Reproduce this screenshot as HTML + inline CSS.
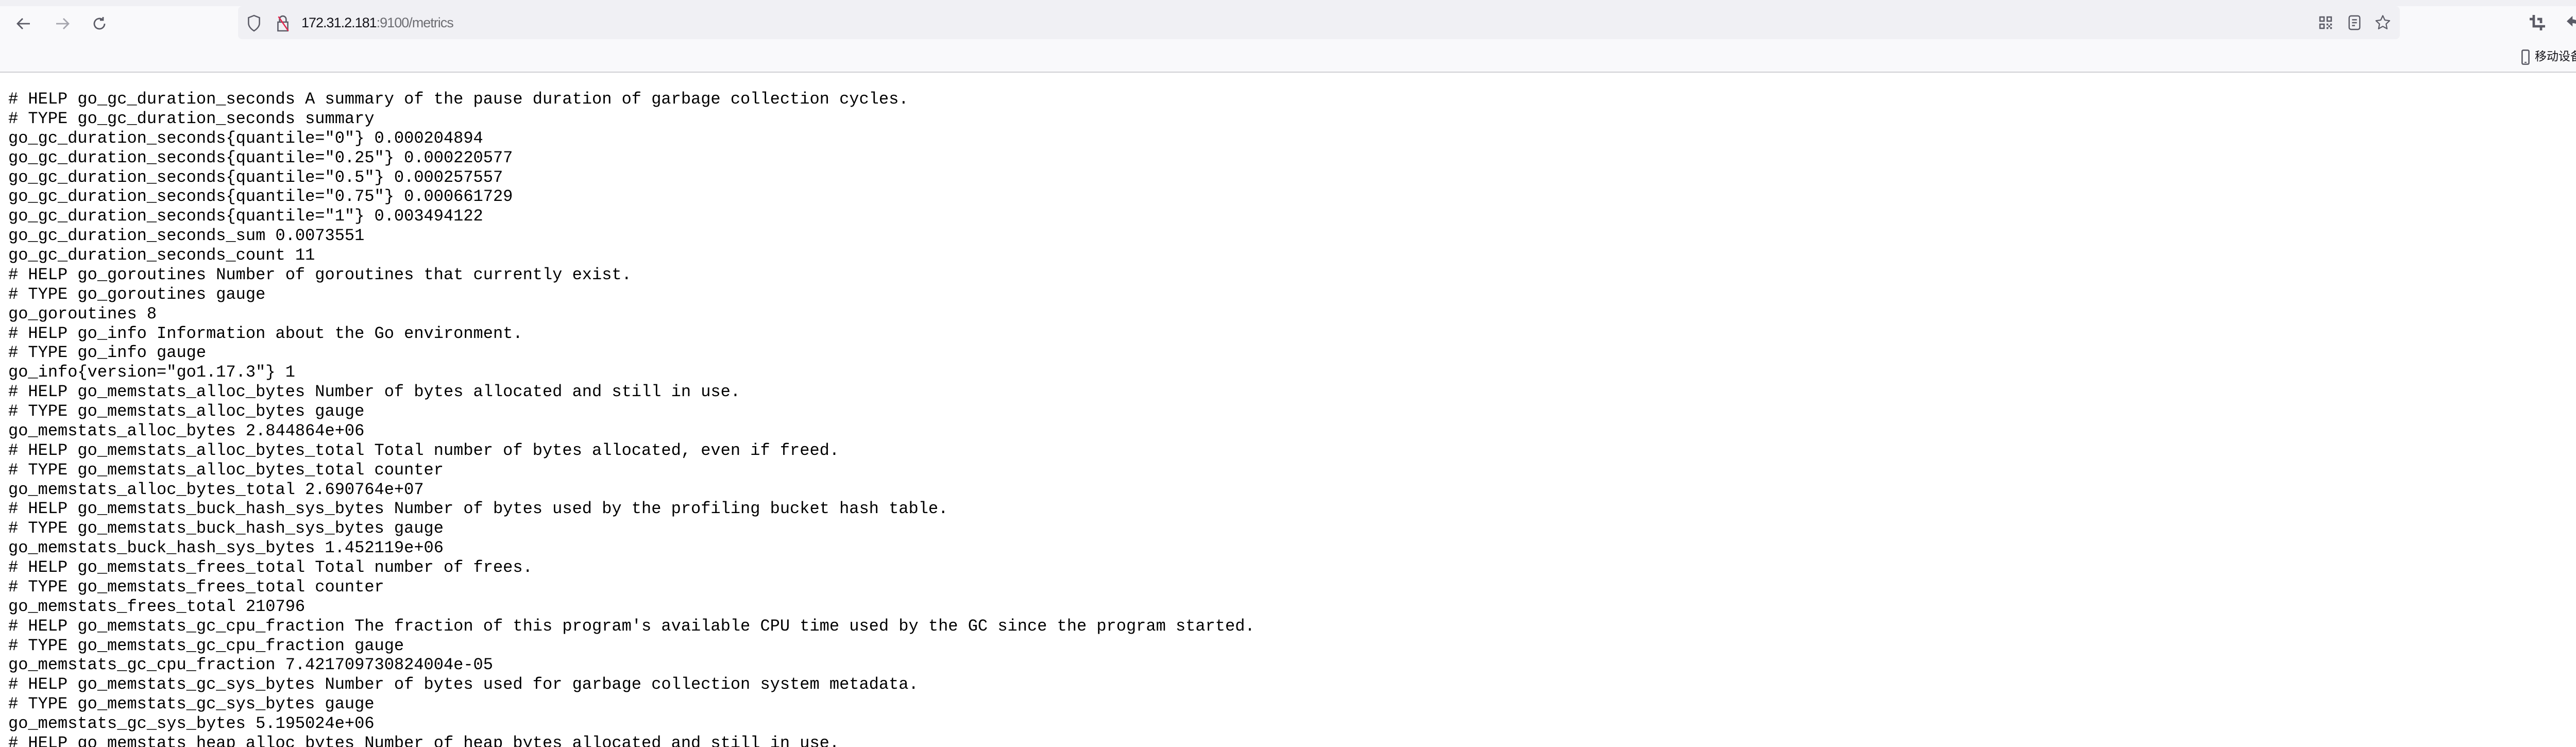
<!DOCTYPE html>
<html><head><meta charset="utf-8">
<style>
html,body{margin:0;padding:0;width:5118px;height:1450px;overflow:hidden;background:#fff;}
#wrap{position:relative;width:5118px;height:1450px;overflow:hidden;}
#tabs{position:absolute;left:0;top:0;width:5118px;height:12px;background:#f0f0f4;}
#bar{position:absolute;left:0;top:12px;width:5118px;height:127px;background:#f9f9fb;border-bottom:2px solid #cfcfd3;}
#url{position:absolute;left:462px;top:12px;width:4196px;height:64px;background:#f0f0f4;border-radius:8px;}
#urltext{position:absolute;left:585px;top:26px;font:27px "Liberation Sans",sans-serif;color:#15141a;line-height:36px;letter-spacing:-1px;white-space:nowrap;}
#urltext span{color:#6e6e73;}
svg{position:absolute;}
#bm{position:absolute;left:4920px;top:94px;font:23px "Liberation Sans","Noto Sans CJK SC",sans-serif;color:#15141a;line-height:30px;white-space:nowrap;}
pre{position:absolute;left:16px;top:174px;width:5000px;height:1276px;overflow:hidden;margin:0;font:32px/37.88px "Liberation Mono",monospace;color:#000;}
#sb{position:absolute;left:5096px;top:144px;width:13px;height:133px;background:#c1c1c1;border-radius:7px;}
</style></head><body><div id="wrap">
<div id="tabs"></div>
<div id="bar"></div>
<div id="url"></div>
<svg style="left:30px;top:30px" width="32" height="32" viewBox="0 0 16 16"><path d="M14 8H2.5M7 3L2 8l5 5" fill="none" stroke="#5b5b66" stroke-width="1.4"/></svg>
<svg style="left:105px;top:30px" width="32" height="32" viewBox="0 0 16 16"><path d="M2 8h11.5M9 3l5 5-5 5" fill="none" stroke="#a5a5ad" stroke-width="1.4"/></svg>
<svg style="left:177px;top:30px" width="32" height="32" viewBox="0 0 16 16"><path d="M13 8a5 5 0 1 1-2-4M11.5 1.5v3h-3" fill="none" stroke="#5b5b66" stroke-width="1.4"/></svg>
<svg style="left:478px;top:28px" width="30" height="34" viewBox="0 0 14 16"><path d="M7 1L2 3v5c0 3 2.5 5.5 5 7 2.5-1.5 5-4 5-7V3z" fill="none" stroke="#5b5b66" stroke-width="1.2"/></svg>
<svg style="left:534px;top:28px" width="30" height="34" viewBox="0 0 14 16"><path d="M4 7V4.5a3 3 0 0 1 6 0V7M2.5 7h9v8h-9z" fill="none" stroke="#5b5b66" stroke-width="1.2"/><path d="M3 2l9 13" stroke="#e22850" stroke-width="1.2"/></svg>
<div id="urltext">172.31.2.181<span>:9100/metrics</span></div>
<svg style="left:4500px;top:30px" width="28" height="28" viewBox="0 0 16 16" fill="#5b5b66"><path d="M1 1h6v6H1zM2.5 2.5v3h3v-3zM9 1h6v6H9zM10.5 2.5v3h3v-3zM1 9h6v6H1zM2.5 10.5v3h3v-3zM9 9h2v2H9zM13 9h2v2h-2zM11 11h2v2h-2zM9 13h2v2H9zM13 13h2v2h-2z"/></svg>
<svg style="left:4556px;top:29px" width="28" height="30" viewBox="0 0 14 16"><rect x="1.5" y="1" width="11" height="14" rx="2" fill="none" stroke="#5b5b66" stroke-width="1.3"/><path d="M4.5 5h5M4.5 8h5M4.5 11h3" stroke="#5b5b66" stroke-width="1.3"/></svg>
<svg style="left:4609px;top:28px" width="32" height="32" viewBox="0 0 16 16"><path d="M8 1.2l2 4.3 4.6.6-3.4 3.2.9 4.6L8 11.6l-4.1 2.3.9-4.6L1.4 6.1 6 5.5z" fill="none" stroke="#5b5b66" stroke-width="1.1" stroke-linejoin="round"/></svg>
<svg style="left:4910px;top:29px" width="30" height="30" viewBox="0 0 16 16" fill="#5b5b66"><path d="M3 0h2.5v10.5H16V13h-3v3h-2.5v-3H3zM0 3h3v2.5H0zM8 3h5v5.5h-2.5V5.5H8z"/></svg>
<svg style="left:4982px;top:29px" width="30" height="30" viewBox="0 0 16 16" fill="#5b5b66"><path d="M6 1L0 6.5 6 12V8.5c4 0 6.5 1.5 7.5 6 1.5-5-1-9.5-7.5-10z"/></svg>
<svg style="left:5054px;top:30px" width="30" height="28" viewBox="0 0 16 14"><path d="M1 1.5h14M1 7h14M1 12.5h14" stroke="#5b5b66" stroke-width="1.4"/></svg>
<svg style="left:4894px;top:96px" width="16" height="30" viewBox="0 0 8 15"><rect x="0.7" y="0.7" width="6.6" height="13.6" rx="1.2" fill="none" stroke="#5b5b66" stroke-width="1.3"/><rect x="3" y="12" width="2" height="1" fill="#5b5b66"/></svg>
<div id="bm">移动设备上的书签</div>
<pre># HELP go_gc_duration_seconds A summary of the pause duration of garbage collection cycles.
# TYPE go_gc_duration_seconds summary
go_gc_duration_seconds{quantile="0"} 0.000204894
go_gc_duration_seconds{quantile="0.25"} 0.000220577
go_gc_duration_seconds{quantile="0.5"} 0.000257557
go_gc_duration_seconds{quantile="0.75"} 0.000661729
go_gc_duration_seconds{quantile="1"} 0.003494122
go_gc_duration_seconds_sum 0.0073551
go_gc_duration_seconds_count 11
# HELP go_goroutines Number of goroutines that currently exist.
# TYPE go_goroutines gauge
go_goroutines 8
# HELP go_info Information about the Go environment.
# TYPE go_info gauge
go_info{version="go1.17.3"} 1
# HELP go_memstats_alloc_bytes Number of bytes allocated and still in use.
# TYPE go_memstats_alloc_bytes gauge
go_memstats_alloc_bytes 2.844864e+06
# HELP go_memstats_alloc_bytes_total Total number of bytes allocated, even if freed.
# TYPE go_memstats_alloc_bytes_total counter
go_memstats_alloc_bytes_total 2.690764e+07
# HELP go_memstats_buck_hash_sys_bytes Number of bytes used by the profiling bucket hash table.
# TYPE go_memstats_buck_hash_sys_bytes gauge
go_memstats_buck_hash_sys_bytes 1.452119e+06
# HELP go_memstats_frees_total Total number of frees.
# TYPE go_memstats_frees_total counter
go_memstats_frees_total 210796
# HELP go_memstats_gc_cpu_fraction The fraction of this program's available CPU time used by the GC since the program started.
# TYPE go_memstats_gc_cpu_fraction gauge
go_memstats_gc_cpu_fraction 7.421709730824004e-05
# HELP go_memstats_gc_sys_bytes Number of bytes used for garbage collection system metadata.
# TYPE go_memstats_gc_sys_bytes gauge
go_memstats_gc_sys_bytes 5.195024e+06
# HELP go_memstats_heap_alloc_bytes Number of heap bytes allocated and still in use.</pre>
<div id="sb"></div>
</div></body></html>
